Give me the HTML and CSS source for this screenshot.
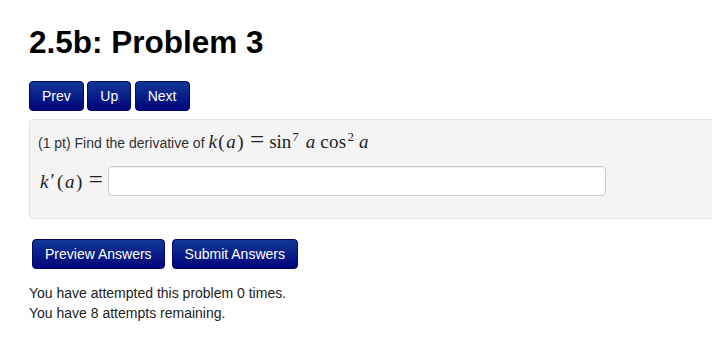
FILE: index.html
```html
<!DOCTYPE html>
<html>
<head>
<meta charset="utf-8">
<link rel="stylesheet" href="styles.css">
</head>
<body>
<div class="page">
  <h2 class="title">2.5b: Problem 3</h2>
  <div class="nav">
    <a class="btn">Prev</a>
    <a class="btn">Up</a>
    <a class="btn">Next</a>
  </div>
  <div class="problem">
    <p class="statement">(1 pt) Find the derivative of <span class="math"><i class="mi">k</i><span class="mo">(</span><i class="mi">a</i><span class="mo">)</span><span class="rel">=</span><span class="fn">sin</span><sup class="sup">7</sup><i class="mi arg">a</i><span class="fn cos">cos</span><sup class="sup">2</sup><i class="mi arg2">a</i></span></p>
    <div class="answer-row">
      <span class="math label"><i class="mi">k</i><span class="prime">′</span><span class="mo">(</span><i class="mi">a</i><span class="mo">)</span><span class="rel">=</span></span>
      <input class="answer" type="text">
    </div>
  </div>
  <div class="submit-row">
    <button class="btn">Preview Answers</button>
    <button class="btn">Submit Answers</button>
  </div>
  <p class="attempts">You have attempted this problem 0 times.<br>You have 8 attempts remaining.</p>
</div>
</body>
</html>
```

FILE: styles.css
```css
html, body {
  margin: 0;
  padding: 0;
  overflow: hidden;
  background: #fff;
}
body {
  font-family: "Liberation Sans", Arial, sans-serif;
  font-size: 14px;
  line-height: 20px;
  color: #333;
}
.page {
  padding: 22px 0 0 29px;
}
.title {
  margin: 0;
  font-size: 31.5px;
  line-height: 40px;
  font-weight: bold;
  color: #000;
}
.nav {
  display: flex;
  gap: 3.5px;
  margin-top: 19px;
}
.btn {
  display: inline-block;
  box-sizing: border-box;
  height: 30px;
  padding: 4px 12px;
  font-family: "Liberation Sans", Arial, sans-serif;
  font-size: 14px;
  line-height: 20px;
  color: #fff;
  background-color: #00087f;
  background-image: linear-gradient(to bottom, #113896, #00057c);
  border: 1px solid #00066a;
  border-radius: 4px;
  text-decoration: none;
  cursor: pointer;
}
.problem {
  box-sizing: border-box;
  width: 720px;
  margin-top: 8px;
  padding: 12px 8px 22px 8px;
  background: #f4f4f4;
  border: 1px solid #e2e2e2;
  border-radius: 4px;
}
.statement {
  margin: 0;
  color: #333;
}
.math {
  font-family: "Liberation Serif", "Times New Roman", serif;
  font-size: 19px;
  line-height: 1;
  color: #222;
  white-space: nowrap;
}
.mi {
  font-style: italic;
}
.mo {
  padding: 0 1.5px;
}
.rel {
  font-size: 25px;
  line-height: 0;
  margin: 0 5px;
}
.sup {
  font-size: 13px;
  line-height: 0;
  vertical-align: 7px;
  margin-left: 1px;
}
.arg {
  margin-left: 7px;
}
.cos {
  margin-left: 5px;
  letter-spacing: 0.3px;
}
.arg2 {
  margin-left: 5px;
}
.answer-row {
  display: flex;
  align-items: center;
  margin-top: 13px;
}
.label {
  margin-left: 2px;
}
.prime {
  display: inline-block;
  font-size: 19px;
  margin: 0 1px 0 2px;
  transform: translateY(-1px);
}
.answer {
  box-sizing: border-box;
  width: 498px;
  height: 30px;
  margin: 0;
  padding: 4px 6px;
  border: 1px solid #ccc;
  border-radius: 4px;
  background: #fff;
  box-shadow: inset 0 1px 1px rgba(0,0,0,0.075);
  font-size: 14px;
}
.submit-row {
  display: flex;
  gap: 7px;
  margin: 20px 0 0 3px;
}
.attempts {
  margin: 14px 0 0 0;
  color: #222;
}
```
